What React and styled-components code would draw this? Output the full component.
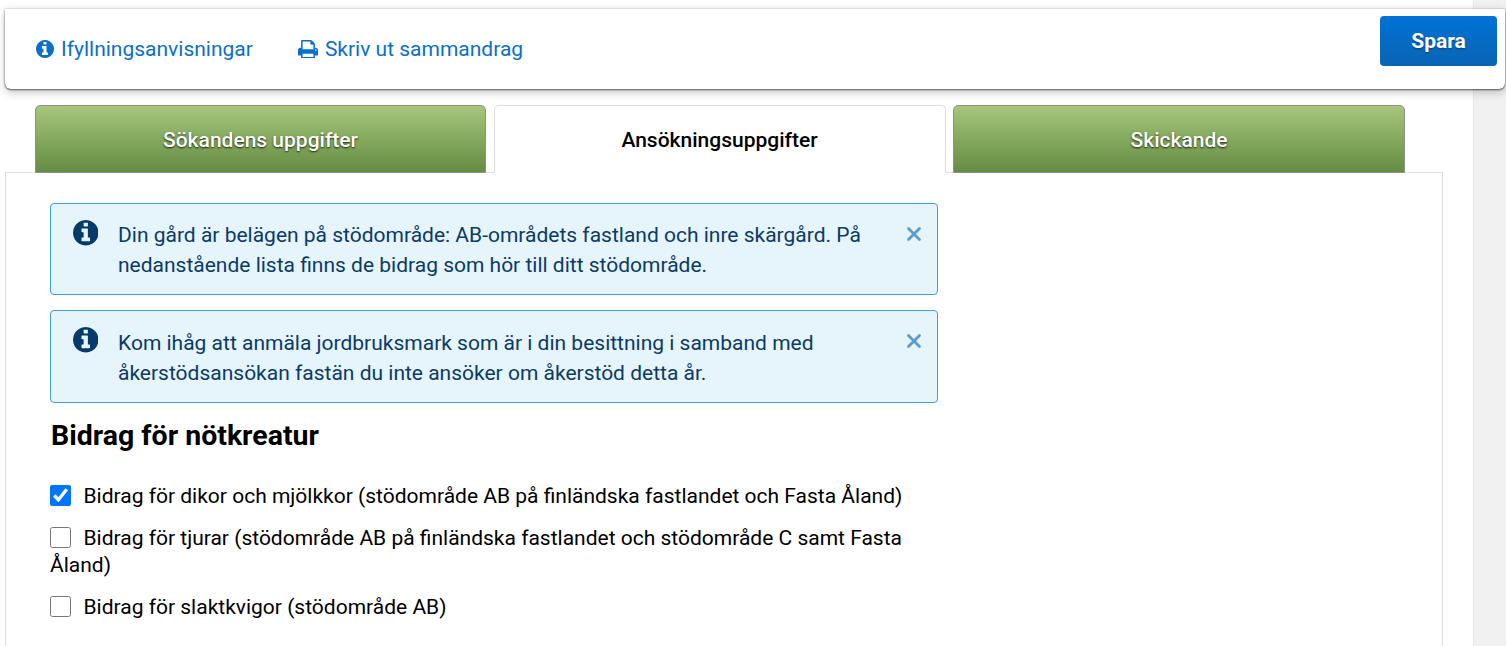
import React from "react";
import styled, { createGlobalStyle } from "styled-components";
import { X } from "lucide-react";

const Global = createGlobalStyle`
  html, body { margin: 0; padding: 0; height: 646px; overflow: hidden; background: #fff; }
  body { font-family: Roboto, "Liberation Sans", sans-serif; color: #000; }
`;
const Page = styled.div`display: flex; height: 646px; overflow: hidden;`;
const Main = styled.main`width: 1473px; flex: none; padding: 9px 0 0 5px; box-sizing: border-box;`;
const Scrollbar = styled.div`flex: 1; background: #f1f1f1; border-left: 1px solid #e6e6e6;`;
const Toolbar = styled.header`
  position: relative; z-index: 2; width: 1500px; height: 80px; box-sizing: border-box;
  display: flex; justify-content: space-between; align-items: flex-start;
  padding: 7px 8px 0 31px; background: #fff; border-radius: 0 0 6px 6px;
  box-shadow: 0 0 1px rgba(0,0,0,.55), 0 1px 2px rgba(0,0,0,.55), 0 4px 8px rgba(0,0,0,.2), 0 -3px 6px rgba(0,0,0,.04);
`;
const Links = styled.nav`display: flex; gap: 45px; height: 66px; align-items: center;`;
const ToolLink = styled.a`
  display: flex; align-items: center; gap: 7px; font-size: 21px; color: #0a6fc9; text-decoration: none;
`;
const SaveButton = styled.button`
  width: 117px; height: 50px; border: 0; border-radius: 4px; color: #fff; font: 700 21px Roboto, sans-serif;
  background: linear-gradient(#0073d6, #0a64b4); text-shadow: 0 1px 2px rgba(0,0,0,.4); padding: 0;
`;
const Tabs = styled.div`
  display: grid; grid-template-columns: 451px 452px 452px; gap: 7.5px; padding: 16px 0 0 30px; height: 84px; box-sizing: border-box;
`;
const Tab = styled.div`
  position: relative; z-index: 1; height: 68px; box-sizing: border-box; display: flex; align-items: center; justify-content: center;
  font-size: 21px; font-weight: 500; border-radius: 5px 5px 0 0; padding-top: 2px;
  border: 1px solid ${p => (p.$active ? "#ddd" : "#8e8e8e")};
  border-bottom: ${p => (p.$active ? "1px solid #fff" : "1px solid #8e8e8e")};
  background: ${p => (p.$active ? "#fff" : "linear-gradient(#a5c77b, #648c42)")};
  color: ${p => (p.$active ? "#000" : "#fff")};
  text-shadow: ${p => (p.$active ? "none" : "0 1px 2px rgba(0,0,0,.8)")};
`;
const Panel = styled.section`
  width: 1438px; height: 480px; margin-top: -1px; box-sizing: border-box; border: 1px solid #ddd; padding: 30px 44px;
`;
const Column = styled.div`width: 888px;`;
const Alert = styled.div`
  position: relative; box-sizing: border-box; height: ${p => p.$h}px; margin-bottom: 15px;
  padding: ${p => p.$top}px 60px 0 67px; font-size: 21px; line-height: 30px; color: #0c3a66;
  background: #e6f4fb; border: 1px solid #3f9cef; border-radius: 4px;
`;
const AlertIcon = styled.span`
  position: absolute; left: 21.5px; top: 16px; display: flex; color: #063a6b;
`;
const Close = styled.span`
  position: absolute; right: 12px; top: 19px; display: flex; color: #5a9bcb;
`;
const Heading = styled.h2`margin: 16px 0 30px 1px; font-size: 28.5px; line-height: 34px; font-weight: 700;`;
const CheckRow = styled.label`display: block; font-size: 21px; line-height: 27px; margin-bottom: 15px;`;
const Box = styled.input.attrs({ type: "checkbox" })`
  width: 21px; height: 21px; margin: 0 12.5px 0 0; vertical-align: -3px;
`;

const InfoIcon = ({ size }) => (
  <svg width={size} height={size} viewBox="128 128 1536 1536" fill="currentColor" fillRule="evenodd">
    <path d="M1152 1376v-160q0-14-9-23t-23-9h-96v-512q0-14-9-23t-23-9h-320q-14 0-23 9t-9 23v160q0 14 9 23t23 9h96v320h-96q-14 0-23 9t-9 23v160q0 14 9 23t23 9h448q14 0 23-9t9-23zm-128-896v-160q0-14-9-23t-23-9h-192q-14 0-23 9t-9 23v160q0 14 9 23t23 9h192q14 0 23-9t9-23zm640 416q0 209-103 385.5t-279.5 279.5-385.5 103-385.5-103-279.5-279.5-103-385.5 103-385.5 279.5-279.5 385.5-103 385.5 103 279.5 279.5 103 385.5z" />
  </svg>
);
const PrintIcon = () => (
  <svg width="20" height="18.5" viewBox="64 128 1664 1536" fill="currentColor" fillRule="evenodd">
    <path d="M448 1536h896v-256h-896v256zm0-640h896v-384h-160q-40 0-68-28t-28-68v-160h-640v640zm1152 64q0-26-19-45t-45-19-45 19-19 45 19 45 45 19 45-19 19-45zm128 0v416q0 13-9.5 22.5t-22.5 9.5h-224v160q0 40-28 68t-68 28h-960q-40 0-68-28t-28-68v-160h-224q-13 0-22.5-9.5t-9.5-22.5v-416q0-79 56.5-135.5t135.5-56.5h64v-544q0-40 28-68t68-28h672q40 0 88 20t76 48l152 152q28 28 48 76t20 88v256h64q79 0 135.5 56.5t56.5 135.5z" />
  </svg>
);

const items = [
  ["Bidrag för dikor och mjölkkor (stödområde AB på finländska fastlandet och Fasta Åland)", true],
  ["Bidrag för tjurar (stödområde AB på finländska fastlandet och stödområde C samt Fasta Åland)", false],
  ["Bidrag för slaktkvigor (stödområde AB)", false],
];

export default function App() {
  return (
    <Page>
      <Global />
      <Main>
        <Toolbar>
          <Links>
            <ToolLink href="#"><InfoIcon size={18} />Ifyllningsanvisningar</ToolLink>
            <ToolLink href="#"><PrintIcon />Skriv ut sammandrag</ToolLink>
          </Links>
          <SaveButton>Spara</SaveButton>
        </Toolbar>
        <Tabs>
          <Tab>Sökandens uppgifter</Tab>
          <Tab $active>Ansökningsuppgifter</Tab>
          <Tab>Skickande</Tab>
        </Tabs>
        <Panel>
          <Column>
            <Alert $h={92} $top={16}>
              <AlertIcon><InfoIcon size={25.5} /></AlertIcon>
              Din gård är belägen på stödområde: AB-områdets fastland och inre skärgård. På nedanstående lista finns de bidrag som hör till ditt stödområde.
              <Close><X size={22} strokeWidth={3} /></Close>
            </Alert>
            <Alert $h={93} $top={17}>
              <AlertIcon><InfoIcon size={25.5} /></AlertIcon>
              Kom ihåg att anmäla jordbruksmark som är i din besittning i samband med åkerstödsansökan fastän du inte ansöker om åkerstöd detta år.
              <Close><X size={22} strokeWidth={3} /></Close>
            </Alert>
            <Heading>Bidrag för nötkreatur</Heading>
            {items.map(([text, checked]) => (
              <CheckRow key={text}><Box defaultChecked={checked} />{text}</CheckRow>
            ))}
          </Column>
        </Panel>
      </Main>
      <Scrollbar />
    </Page>
  );
}
